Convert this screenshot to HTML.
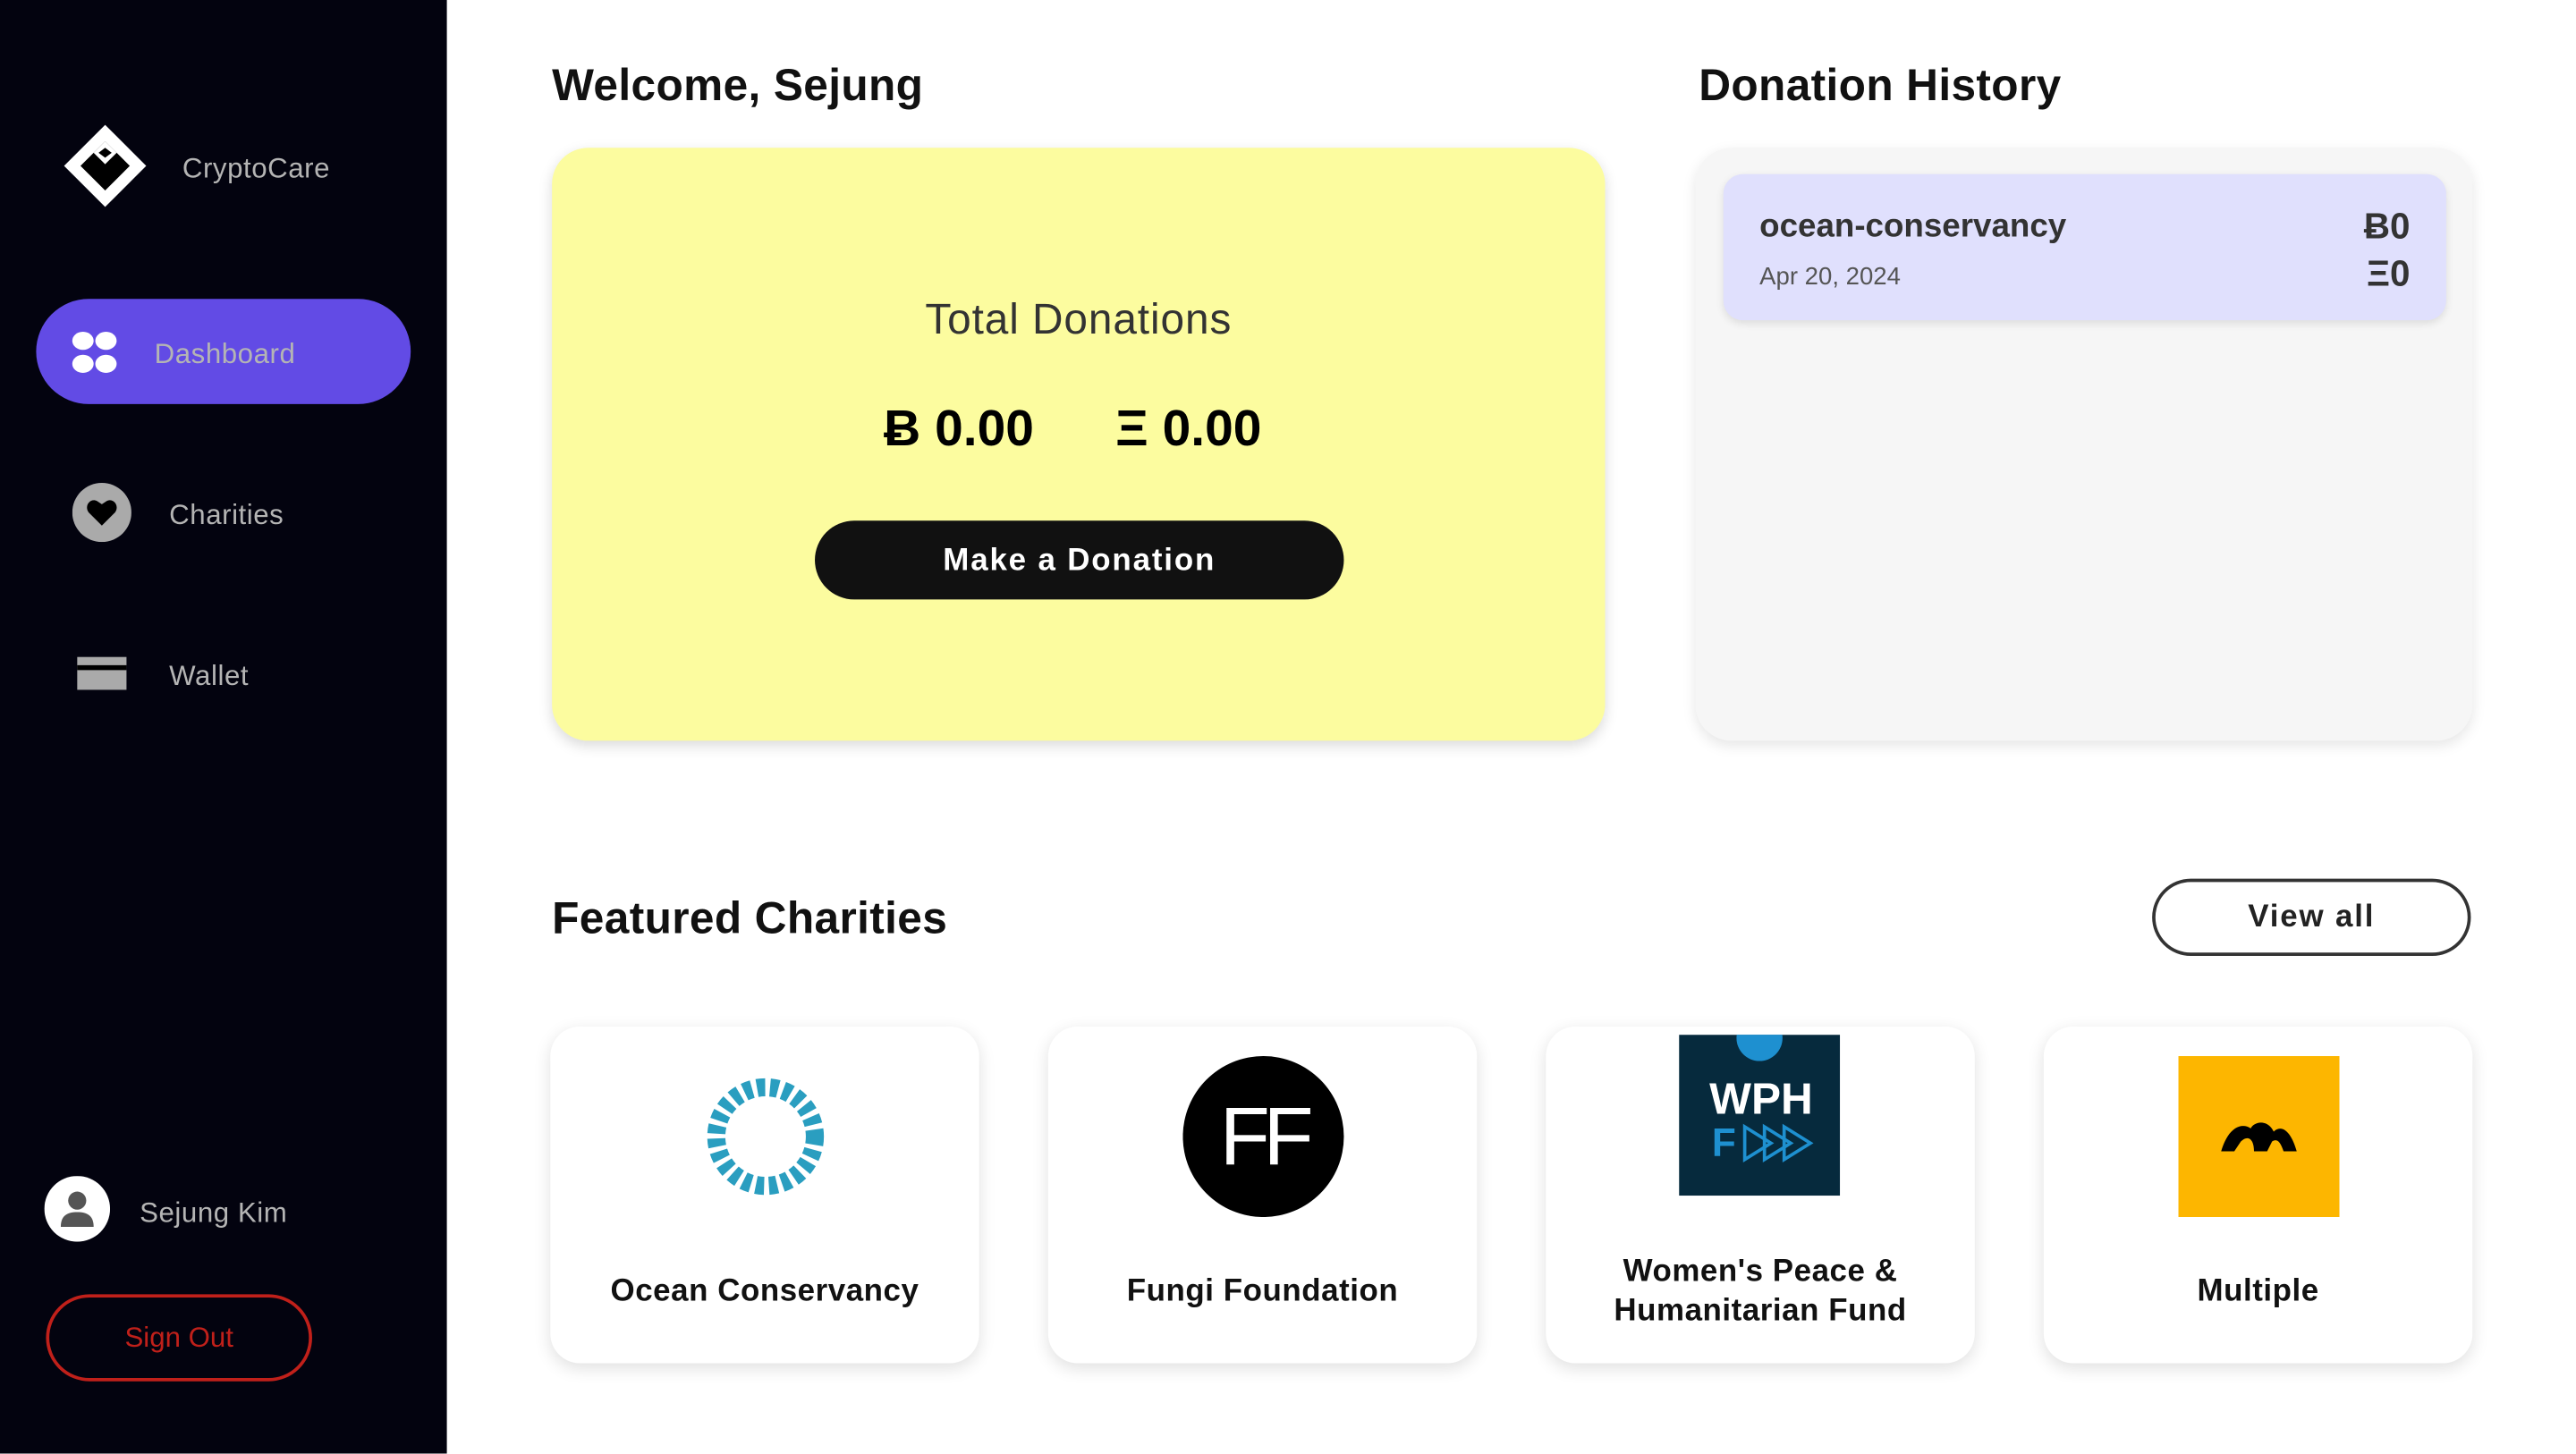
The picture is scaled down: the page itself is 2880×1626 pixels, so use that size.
<!DOCTYPE html>
<html><head><meta charset="utf-8"><style>
*{margin:0;padding:0;box-sizing:border-box}
html,body{width:2880px;height:1626px;overflow:hidden;background:#fff;font-family:"Liberation Sans",sans-serif}
#w{width:1568px;height:885px;transform:scale(1.83674);transform-origin:0 0;position:relative}
.a{position:absolute}
.sb{left:0;top:0;width:272px;height:885px;background:#03030f}
.nt{color:#b4b4b4;font-size:17px;letter-spacing:.3px}
.h{font-size:27px;font-weight:bold;color:#111;letter-spacing:.2px}
.card{background:#fff;border-radius:18px;box-shadow:0 3px 10px rgba(0,0,0,.12);width:261px;height:205px;top:625px}
.cn{position:absolute;left:0;right:0;text-align:center;font-size:19px;font-weight:bold;color:#111;letter-spacing:.3px}
.lg{position:absolute;left:82px;top:18px;width:98px;height:98px}
</style></head><body><div id="w">
<div class="a sb"></div>
<svg class="a" style="left:38px;top:75px" width="52" height="52" viewBox="0 0 52 52"><path d="M26 1 L51 26 L26 51 L1 26 Z" fill="#fff"/><path d="M26 11 L41 26 L26 41 L11 26 Z" fill="#000"/><path d="M26 11 L33 18 L26 25 L19 18 Z" fill="#fff"/><path d="M26 15 L30 18 L26 21 L22 18Z" fill="#000"/></svg>
<div class="a nt" style="left:111px;top:93px">CryptoCare</div>
<div class="a" style="left:22px;top:182px;width:228px;height:64px;background:#624be5;border-radius:32px"></div>
<svg class="a" style="left:43px;top:200px" width="30" height="30"><ellipse cx="7.5" cy="7.5" rx="6.5" ry="5.5" fill="#fff"/><ellipse cx="21.5" cy="7.5" rx="6.5" ry="5.5" fill="#fff"/><ellipse cx="7.5" cy="21.5" rx="6.5" ry="5.5" fill="#fff"/><ellipse cx="21.5" cy="21.5" rx="6.5" ry="5.5" fill="#fff"/></svg>
<div class="a nt" style="left:94px;top:206px">Dashboard</div>
<svg class="a" style="left:44px;top:294px" width="36" height="36"><circle cx="18" cy="18" r="18" fill="#aaa"/><path d="M18 26 L10 18 C7 14 11 9 15 11 L18 13 L21 11 C25 9 29 14 26 18 Z" fill="#000"/></svg>
<div class="a nt" style="left:103px;top:304px">Charities</div>
<svg class="a" style="left:46px;top:398px" width="32" height="24"><rect x="1" y="2" width="30" height="20" fill="#aaa"/><rect x="1" y="7" width="30" height="3" fill="#000"/></svg>
<div class="a nt" style="left:103px;top:402px">Wallet</div>
<svg class="a" style="left:27px;top:716px" width="40" height="40"><circle cx="20" cy="20" r="20" fill="#fff"/><circle cx="20" cy="15" r="5.5" fill="#555"/><path d="M10 31 C10 24 14 22 20 22 C26 22 30 24 30 31 Z" fill="#555"/></svg>
<div class="a nt" style="left:85px;top:729px">Sejung Kim</div>
<div class="a" style="left:28px;top:788px;width:162px;height:53px;border:2px solid #c0201a;border-radius:27px;color:#c0201a;font-size:17px;text-align:center;line-height:50px">Sign Out</div>

<div class="a h" style="left:336px;top:37px">Welcome, Sejung</div>
<div class="a" style="left:336px;top:90px;width:641px;height:361px;background:#fcfc9f;border-radius:22px;box-shadow:0 3px 8px rgba(0,0,0,.15)"></div>
<div class="a" style="left:336px;top:179px;width:641px;text-align:center;font-size:26px;color:#333;letter-spacing:.5px">Total Donations</div>
<div class="a" style="left:538px;top:243px;font-size:31px;font-weight:bold;color:#000">Ƀ 0.00</div>
<div class="a" style="left:679px;top:243px;font-size:31px;font-weight:bold;color:#000">Ξ 0.00</div>
<div class="a" style="left:496px;top:317px;width:322px;height:48px;background:#111;border-radius:24px;color:#fff;font-size:19px;font-weight:bold;text-align:center;line-height:49px;letter-spacing:1px">Make a Donation</div>

<div class="a h" style="left:1034px;top:37px">Donation History</div>
<div class="a" style="left:1032px;top:90px;width:473px;height:361px;background:#f6f6f6;border-radius:22px;box-shadow:0 3px 8px rgba(0,0,0,.1)"></div>
<div class="a" style="left:1049px;top:106px;width:440px;height:89px;background:#e0e0fd;border-radius:12px;box-shadow:0 2px 5px rgba(0,0,0,.1)"></div>
<div class="a" style="left:1071px;top:127px;font-size:20px;font-weight:bold;color:#333">ocean-conservancy</div>
<div class="a" style="left:1071px;top:160px;font-size:15px;color:#555">Apr 20, 2024</div>
<div class="a" style="left:1400px;top:125px;width:67px;text-align:right;font-size:22px;font-weight:bold;color:#333">Ƀ0</div>
<div class="a" style="left:1400px;top:154px;width:67px;text-align:right;font-size:22px;font-weight:bold;color:#333">Ξ0</div>

<div class="a h" style="left:336px;top:544px">Featured Charities</div>
<div class="a" style="left:1310px;top:535px;width:194px;height:47px;border:2px solid #333;border-radius:24px;font-size:19px;font-weight:bold;color:#222;text-align:center;line-height:44px;letter-spacing:1px">View all</div>

<div class="a card" style="left:335px"><svg class="lg" viewBox="0 0 98 98"><circle cx="49" cy="49" r="30" fill="none" stroke="#2a9ec0" stroke-width="11" stroke-dasharray="5 3"/><circle cx="49" cy="49" r="20" fill="#fff"/></svg><div class="cn" style="top:151px">Ocean Conservancy</div></div>
<div class="a card" style="left:638px"><svg class="lg" viewBox="0 0 98 98"><circle cx="49" cy="49" r="49" fill="#000"/><text x="49" y="66" text-anchor="middle" font-family="Liberation Sans" font-size="50" fill="#fff" letter-spacing="-4">FF</text></svg><div class="cn" style="top:151px">Fungi Foundation</div></div>
<div class="a card" style="left:941px"><svg class="lg" style="left:81px;top:5px" viewBox="0 0 98 98"><rect width="98" height="98" fill="#062a3d"/><circle cx="49" cy="2" r="14" fill="#1e90d0"/><text x="50" y="48" text-anchor="middle" font-family="Liberation Sans" font-weight="bold" font-size="27" fill="#fff">WPH</text><text x="20" y="74" font-family="Liberation Sans" font-weight="bold" font-size="24" fill="#1e90d0">F</text><path d="M40 56 l16 10 -16 10z M52 56 l16 10 -16 10z M64 56 l16 10 -16 10z" fill="none" stroke="#1e90d0" stroke-width="2"/></svg><div class="cn" style="top:138px;line-height:24px">Women's Peace &amp;<br>Humanitarian Fund</div></div>
<div class="a card" style="left:1244px"><svg class="lg" viewBox="0 0 98 98"><rect width="98" height="98" fill="#fdb600"/><path d="M26 58 C30 44 38 40 44 44 C46 40 54 38 58 46 C62 42 68 44 72 58 L64 58 C62 52 60 50 57 52 L54 58 L46 58 C46 50 42 48 38 52 L34 58Z" fill="#000"/></svg><div class="cn" style="top:151px">Multiple</div></div>
</div></body></html>
